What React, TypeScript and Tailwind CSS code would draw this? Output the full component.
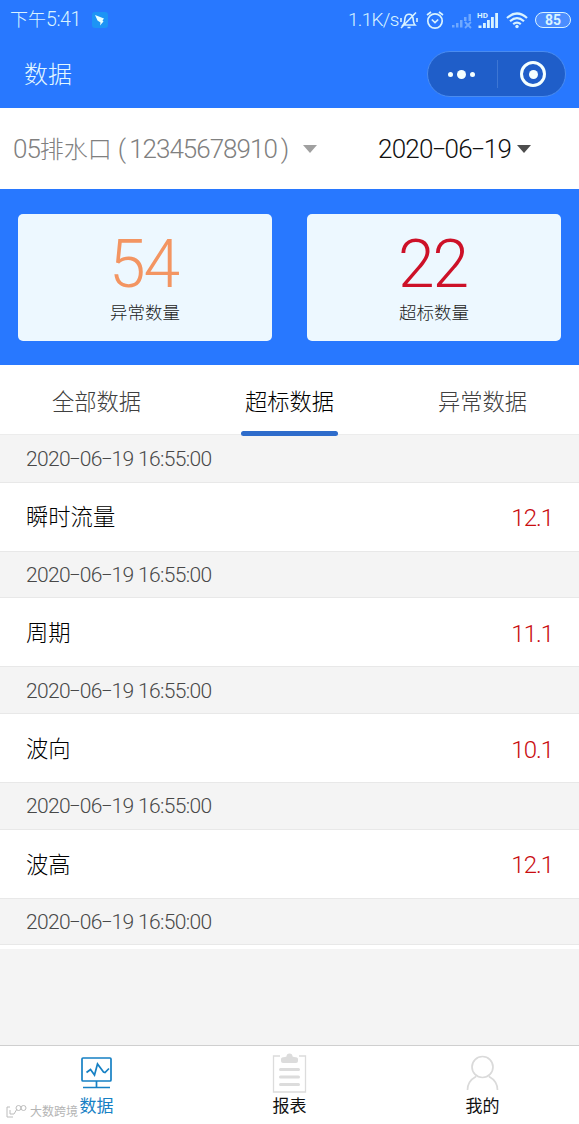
import { Fragment } from "react";

const summary = [
  { label: "异常数量", value: 54, color: "text-[#f39562]" },
  { label: "超标数量", value: 22, color: "text-[#cd1128]" },
];

const tabs = ["全部数据", "超标数据", "异常数据"];

const records = [
  { time: "2020-06-19 16:55:00", name: "瞬时流量", value: "12.1" },
  { time: "2020-06-19 16:55:00", name: "周期", value: "11.1" },
  { time: "2020-06-19 16:55:00", name: "波向", value: "10.1" },
  { time: "2020-06-19 16:55:00", name: "波高", value: "12.1" },
];

// date with wide hyphens, the default ones are too short
function DateText({ value }: { value: string }) {
  return (
    <span className="whitespace-nowrap tracking-[-0.03em]">
      {value.split("-").map((part, i) => (
        <Fragment key={i}>
          {i > 0 && (
            <span className="inline-block w-[0.46em] -translate-y-px scale-x-[1.7] text-center tracking-normal">-</span>
          )}
          {part}
        </Fragment>
      ))}
    </span>
  );
}

function StatusBar() {
  return (
    <div className="flex h-10 items-center justify-between pl-[10px] pr-2 text-[18px] text-[#d9f3ff]">
      <div className="flex items-center">
        <span className="w-[82px] whitespace-nowrap">
          下午<span className="text-[19.5px] tracking-[-0.4px]">5:41</span>
        </span>
        <svg className="size-4" viewBox="0 0 16 16">
          <rect width="16" height="16" rx="3" fill="#1d94f5" />
          <path d="M3 3 12 6.5 10.5 8.5 11.5 9.5 8 13.5 8.500 10.5 5.5 8.5Z" fill="#e8ffff" />
        </svg>
      </div>
      <div className="flex items-center">
        <span className="w-[52px] whitespace-nowrap text-[19px] tracking-[-0.7px]">1.1K/s</span>
        <svg className="h-5 w-[18px]" viewBox="0 0 18 20" fill="none" stroke="currentColor" strokeWidth="1.6">
          <path d="M3 15h12c-2-2-1.5-4-2-7-1-5-7-5-8 0-.5 3 0 5-2 7ZM7.500 17.500h3M1 18 16 2.500M1 8v4M17 8v4" />
        </svg>
        <svg className="ml-[8px] h-5 w-[18px]" viewBox="0 0 18 20" fill="none" stroke="currentColor" strokeWidth="1.7">
          <circle cx="9" cy="11" r="7.200" />
          <path d="m1 5 4-3M17 5l-4-3M5.800 9.500 9 12.500l3.200-3" />
        </svg>
        <svg className="ml-[7px] h-5 w-[22px] opacity-40" viewBox="0 0 22 20" fill="currentColor">
          <path d="M1 15h2.5v2.500H1zM5 13h2.5v4.500H5zM9 10h2.5v7.500H9zM13 7h2.5v4H13zM17.5 4H20v7h-2.500z" />
          <path d="m14 12 6 6m0-6-6 6" stroke="currentColor" strokeWidth="1.8" />
        </svg>
        <svg className="ml-[4px] h-5 w-[23px]" viewBox="0 0 23 20" fill="currentColor">
          <text x="0" y="7.5" fontSize="8" fontWeight="700">HD</text>
          <path d="M1.5 15.500h3V18h-3zM6 13h2.800v5H6zM10 10h2.800v8H10zM14 7h2.800v11H14zM18.200 3H21v15h-2.800z" />
        </svg>
        <svg className="ml-[6px] h-5 w-[22px]" viewBox="0 0 22 20" fill="none" stroke="currentColor" strokeWidth="2.2">
          <path d="M1 8Q11-1 21 8M4 11.200Q11 5 18 11.200M7.200 14.200Q11 11 14.800 14.200" />
          <circle cx="11" cy="16.500" r="1.700" fill="currentColor" stroke="none" />
        </svg>
        <span className="ml-[7px] flex h-4 w-[36px] items-center justify-center rounded-full border-[1.5px] border-current bg-[#4b8dff] text-[14px] font-bold">
          85
        </span>
      </div>
    </div>
  );
}

function Header() {
  return (
    <header className="flex h-[68px] items-center justify-between pl-6 pr-[13px]">
      <h1 className="pt-px text-[24px] font-light text-[#e2f7ff]">数据</h1>
      <div className="flex h-[46px] w-[139px] items-center rounded-full border border-[#4a8cf0] bg-[#1f5ec9] text-[#f4ffff]">
        <div className="flex w-[69px] items-center justify-center gap-1 pr-[2px]">
          <i className="size-[5px] rounded-full bg-current" />
          <i className="size-[9px] rounded-full bg-current" />
          <i className="size-[5px] rounded-full bg-current" />
        </div>
        <div className="h-7 w-px bg-[#3d76d4]" />
        <div className="flex flex-1 justify-center pl-[3px]">
          <div className="flex size-[26px] items-center justify-center rounded-full border-[3px] border-current">
            <i className="size-[9px] rounded-full bg-current" />
          </div>
        </div>
      </div>
    </header>
  );
}

function Filters() {
  return (
    <div className="flex h-[81px] items-center bg-white pl-[13px] pt-px text-[26px]">
      <div className="flex w-[365px] items-center text-[#808080]">
        <span className="w-[290px] whitespace-nowrap tracking-[-1px]">
          05<span className="text-[24px] tracking-normal">排水口</span>
          <span className="ml-[6px]">(</span>
          <span className="mx-1">12345678910</span>)
        </span>
        <i className="border-x-[7px] border-t-[8px] border-x-transparent border-t-[#a0a0a0]" />
      </div>
      <span className="w-[139px] text-[#111]">
        <DateText value="2020-06-19" />
      </span>
      <i className="border-x-[7px] border-t-[8px] border-x-transparent border-t-[#4d4d4d]" />
    </div>
  );
}

function ScreenIcon() {
  return (
    <svg className="h-10 w-9" viewBox="0 0 36 40" fill="none" stroke="#1680c4" strokeWidth="1.7">
      <rect x="3" y="5" width="29" height="23" rx="1" />
      <path d="M7.500 19.500l4-3 4 5.500 3-11 6 8 1.500.5 4-4M17.5 28v6.500M4 34.500h27" />
    </svg>
  );
}

function ReportIcon() {
  return (
    <svg className="h-10 w-9" viewBox="0 0 36 40" fill="none" stroke="#dcdcdc" strokeWidth="1.3">
      <path d="M8 3H1.5v36h32V3H27" />
      <path d="M9 8V6q0-2 4-2l1.500-.5q0-3 3-3t3 3L22 4q4 0 4 2v2q0 2-2 2H11q-2 0-2-2Z" fill="#dcdcdc" stroke="none" />
      <path d="M8.500 16.500h18M8.500 24h18M8.500 31.500h18" strokeWidth="3" strokeLinecap="round" />
    </svg>
  );
}

function UserIcon() {
  return (
    <svg className="h-10 w-9" viewBox="0 0 36 40" fill="none" stroke="#dadada" strokeWidth="1.7">
      <circle cx="17.5" cy="14" r="10.5" />
      <path d="M2.500 37c0-6 4-11 8.500-13.500M32.500 37c0-6-4-11-8.500-13.500" />
    </svg>
  );
}

function TabBar() {
  return (
    <nav className="relative flex h-[79px] border-t border-[#cfcfcf] bg-white text-[17px] font-normal leading-[26px] text-[#111]">
      <div className="flex flex-1 flex-col items-center pt-[7px] text-[#1680c4]">
        <ScreenIcon />
        <span>数据</span>
      </div>
      <div className="flex flex-1 flex-col items-center pt-[7px]">
        <ReportIcon />
        <span>报表</span>
      </div>
      <div className="flex flex-1 flex-col items-center pt-[7px]">
        <UserIcon />
        <span>我的</span>
      </div>
      <div className="absolute bottom-0 left-[6px] flex h-6 items-center gap-[3px] text-[#bcbcbc]">
        <svg className="h-4 w-[21px]" viewBox="0 0 21 16" fill="none" stroke="currentColor">
          <path d="M4 3H1v10h6M4 6v4h4l3-5" />
          <circle cx="12.500" cy="4" r="2.500" />
          <circle cx="17.500" cy="4" r="2.500" />
        </svg>
        <span className="text-[12px] text-[#b4b4b4]">大数跨境</span>
      </div>
    </nav>
  );
}

export default function App() {
  return (
    <div className="flex h-[1124px] w-[579px] flex-col overflow-hidden bg-[#f4f4f4] font-['Roboto','Noto_Sans_CJK_SC',sans-serif] font-light">
      <div className="h-[108px] bg-[#2878ff]">
        <StatusBar />
        <Header />
      </div>
      <Filters />
      <section className="flex h-[176px] gap-[35px] bg-[#2878ff] px-[18px] pt-[25px]">
        {summary.map((item) => (
          <div key={item.label} className="flex h-[127px] flex-1 flex-col items-center rounded-[5px] bg-[#edf8ff]">
            <span className={`mt-[17px] pr-[3px] text-[66px] leading-[67px] tracking-[-2px] ${item.color}`}>
              {item.value}
            </span>
            <span className="pt-px text-[17.5px] leading-7 text-[#222]">{item.label}</span>
          </div>
        ))}
      </section>
      <div className="flex h-[70px] border-b border-[#ececec] bg-white text-[22.3px]">
        {tabs.map((tab, i) => (
          <div key={tab} className="relative flex flex-1 justify-center pt-5 leading-[34px]">
            <span className={i === 1 ? "text-[#000]" : "text-[#404040]"}>{tab}</span>
            {i === 1 && <i className="absolute -bottom-[2px] h-[5px] w-[97px] rounded-sm bg-[#2e6ccb]" />}
          </div>
        ))}
      </div>
      <main className="flex-1">
        {records.map((record, i) => (
          <div key={i} className="h-[115.8px]">
            <div className="flex h-[46.6px] items-center pl-[26px] pt-[3px] text-[21px] text-[#484848]">
              <DateText value={record.time} />
            </div>
            <div className="flex h-[70px] items-center justify-between border-y border-[#e8e8e8] bg-white px-[26px] pt-[3px] text-[22.3px] text-[#000]">
              <span>{record.name}</span>
              <span className="text-[24px] tracking-[-1px] text-[#c90d10]">{record.value}</span>
            </div>
          </div>
        ))}
        <div className="flex h-[47px] items-center border-b border-[#e8e8e8] pl-[26px] pt-[3px] text-[21px] text-[#484848]">
          <DateText value="2020-06-19 16:50:00" />
        </div>
        <div className="h-1 bg-white" />
      </main>
      <TabBar />
    </div>
  );
}
